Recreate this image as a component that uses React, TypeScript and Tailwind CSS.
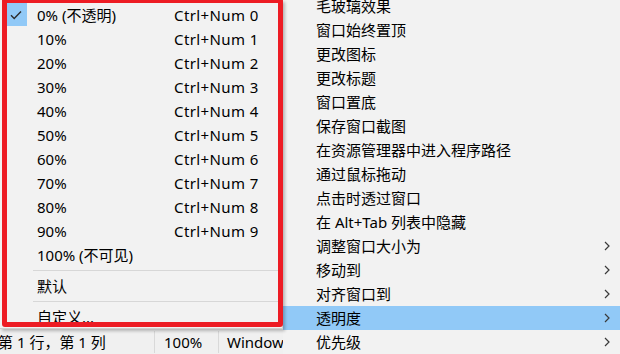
import React from "react";

const font = { fontFamily: '"Noto Sans", "Noto Sans CJK SC", sans-serif' };

const levels = [
  { label: "0% (不透明)", key: "Ctrl+Num 0", checked: true },
  { label: "10%", key: "Ctrl+Num 1" },
  { label: "20%", key: "Ctrl+Num 2" },
  { label: "30%", key: "Ctrl+Num 3" },
  { label: "40%", key: "Ctrl+Num 4" },
  { label: "50%", key: "Ctrl+Num 5" },
  { label: "60%", key: "Ctrl+Num 6" },
  { label: "70%", key: "Ctrl+Num 7" },
  { label: "80%", key: "Ctrl+Num 8" },
  { label: "90%", key: "Ctrl+Num 9" },
  { label: "100% (不可见)", key: "" },
];

const parentItems = [
  { label: "毛玻璃效果" },
  { label: "窗口始终置顶" },
  { label: "更改图标" },
  { label: "更改标题" },
  { label: "窗口置底" },
  { label: "保存窗口截图" },
  { label: "在资源管理器中进入程序路径" },
  { label: "通过鼠标拖动" },
  { label: "点击时透过窗口" },
  { label: "在 Alt+Tab 列表中隐藏" },
  { label: "调整窗口大小为", sub: true },
  { label: "移动到", sub: true },
  { label: "对齐窗口到", sub: true },
  { label: "透明度", sub: true, active: true },
  { label: "优先级", sub: true },
];

function Check() {
  return (
    <svg width="12" height="10" viewBox="0 0 12 10" fill="none">
      <path d="M1 5.2 L4.2 8.4 L11 1.4" stroke="#2b2b2b" strokeWidth="1.4" />
    </svg>
  );
}

function Chevron() {
  return (
    <svg width="6" height="10" viewBox="0 0 6 10" fill="none">
      <path d="M1 1 L5 5 L1 9" stroke="#3a3a3a" strokeWidth="1.2" />
    </svg>
  );
}

function SubMenu() {
  return (
    <div className="relative w-[283px] h-[329px] shrink-0 bg-[#f2f2f2] border-r border-b border-[#cfcfcf] shadow-[2px_2px_3px_rgba(0,0,0,0.25)] pt-[3px] text-[15px] text-black">
      {levels.map((l) => (
        <div key={l.label} className="relative flex h-[24px] items-center">
          {l.checked && (
            <div className="absolute left-[4px] top-0 flex h-[23px] w-[23px] items-center justify-center bg-[#91c9f7]">
              <Check />
            </div>
          )}
          <span className="ml-[37px] w-[137px]">{l.label}</span>
          <span className="tracking-[0.4px]">{l.key}</span>
        </div>
      ))}
      <div className="ml-[33px] my-[3px] h-px bg-[#d7d7d7]" />
      <div className="flex h-[24px] items-center pl-[37px]">默认</div>
      <div className="ml-[33px] my-[3px] h-px bg-[#d7d7d7]" />
      <div className="flex h-[24px] items-center pl-[37px]">自定义...</div>
      {/* red annotation box */}
      <div className="pointer-events-none absolute left-[2px] top-[-2px] h-[329px] w-[281px] rounded-[3px] border-[5px] border-[#ed1c24]" />
    </div>
  );
}

function StatusBar() {
  return (
    <div className="flex w-[283px] flex-1 items-end overflow-hidden bg-[#f0f0f0] text-[15px] text-black">
      <div className="flex h-[24px] w-full items-center">
        <div className="w-[157px] shrink-0 -ml-[2px] border-r border-[#d9d9d9] whitespace-nowrap">第 1 行，第 1 列</div>
        <div className="w-[64px] shrink-0 pl-[9px] border-r border-[#d9d9d9]">100%</div>
        <div className="min-w-0 pl-[8px] whitespace-nowrap overflow-hidden">Windows (CRLF)</div>
      </div>
    </div>
  );
}

function ParentMenu() {
  return (
    <div className="flex-1 overflow-hidden bg-[#f2f2f2] text-[15px] text-black">
      <div className="-mt-[6px]">
        {parentItems.map((p) => (
          <div
            key={p.label}
            className={`flex h-[24px] items-center pl-[33px] pr-[10px] ${p.active ? "bg-[#91c9f7]" : ""}`}
          >
            <span className="flex-1">{p.label}</span>
            {p.sub && <Chevron />}
          </div>
        ))}
      </div>
    </div>
  );
}

export default function App() {
  return (
    <div className="flex h-[354px] w-[620px] overflow-hidden bg-[#f2f2f2]" style={font}>
      <div className="relative z-10 flex w-[286px] shrink-0 flex-col">
        <SubMenu />
        <StatusBar />
      </div>
      <div className="-ml-[3px] flex flex-1">
        <ParentMenu />
      </div>
    </div>
  );
}
